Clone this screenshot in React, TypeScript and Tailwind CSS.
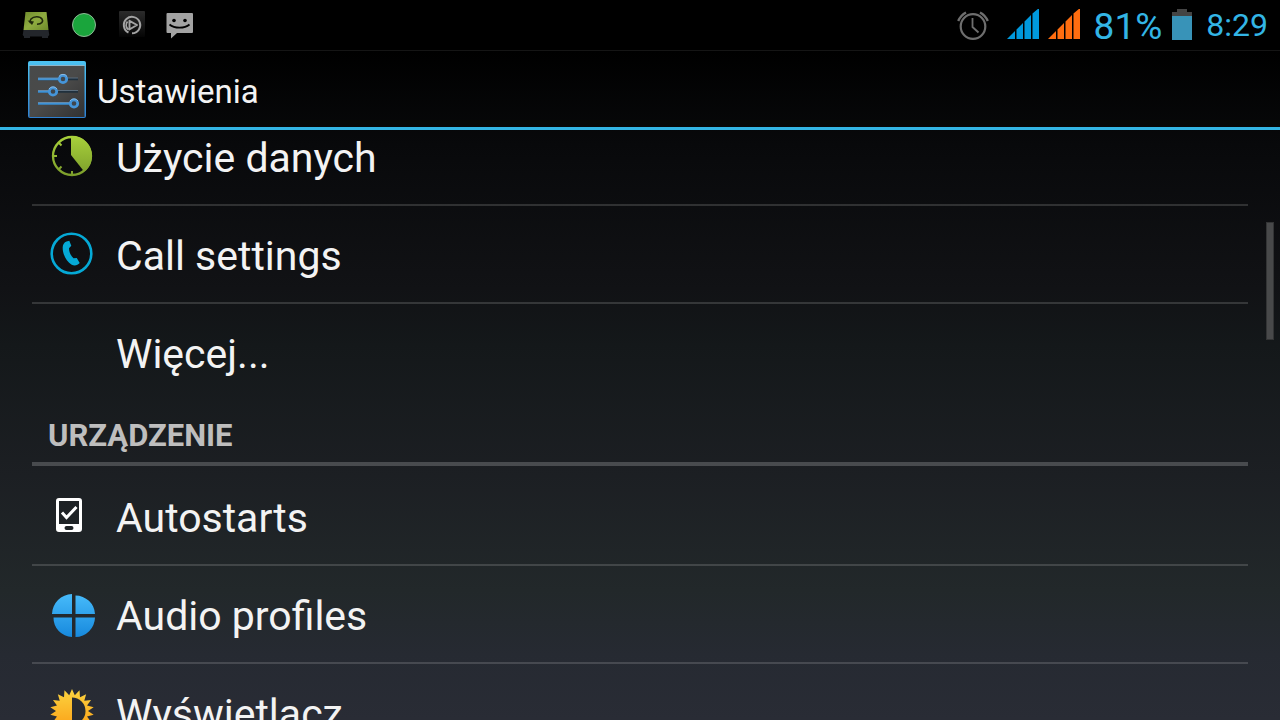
import React from 'react';

const DriveIcon = () => (
  <svg width="28" height="28" viewBox="0 0 28 28" aria-hidden="true">
    <defs>
      <linearGradient id="drive" x1="0" y1="0" x2="1" y2="1">
        <stop offset="0" stopColor="#6f8b2c" />
        <stop offset="0.5" stopColor="#8fac40" />
        <stop offset="1" stopColor="#6d8a2a" />
      </linearGradient>
    </defs>
    <path d="M3.500 1h21l2 18h-25z" fill="url(#drive)" />
    <path d="M1.500 19h25l.8 5-1.300 1.500V27h-6v-1.500H8V27H2v-1.500L.7 24z" fill="#23262b" />
    <path d="M15 13.300c5-.2 6.500-3 5-5.300-2-3-8.500-2.800-11 0-1 1.200-1.200 2.500-.5 4" fill="none" stroke="#20290c" strokeWidth="1.600" />
    <path d="M5.500 9.500l6.500 1-2 3.500z" fill="#20290c" />
  </svg>
);

const PlayerIcon = () => (
  <svg width="28" height="28" viewBox="0 0 28 28" aria-hidden="true">
    <defs>
      <linearGradient id="player" x1="0" y1="0" x2="0" y2="1">
        <stop offset="0" stopColor="#2b2b2b" />
        <stop offset="1" stopColor="#050505" />
      </linearGradient>
    </defs>
    <rect x="1" y="0" width="26" height="26" rx="1" fill="url(#player)" />
    <path d="M10.500 21.500A8.200 8.200 0 1 1 14 22.300" fill="none" stroke="#a3a3a3" strokeWidth="2" />
    <path d="M10 18.500A6 6 0 0 1 9.500 10.500M11.500 18.500V9.800l7.500 4.200-8.500 5" fill="none" stroke="#a3a3a3" strokeWidth="1.900" strokeLinejoin="round" />
  </svg>
);

const MessageIcon = () => (
  <svg width="28" height="28" viewBox="0 0 28 28" aria-hidden="true">
    <path d="M1.500 2h24.500a1 1 0 0 1 1 1v18a1 1 0 0 1-1 1H11l-6 5.500V22H1.500a1 1 0 0 1-1-1V3a1 1 0 0 1 1-1z" fill="#a3a3a3" />
    <circle cx="8" cy="9.500" r="1.800" fill="#000" />
    <circle cx="19" cy="9.500" r="1.800" fill="#000" />
    <path d="M3.500 13.500c5 4.200 15 4.200 20 0" fill="none" stroke="#000" strokeWidth="1.800" />
  </svg>
);

const AlarmIcon = () => (
  <svg width="32" height="32" viewBox="0 0 32 32" fill="none" stroke="#6e6e6e" aria-hidden="true">
    <circle cx="16" cy="17.500" r="12.300" strokeWidth="2.200" />
    <path d="M15.500 9v9l6 5.500" strokeWidth="1.800" />
    <path d="M1.200 12C2.800 8.500 5 5.500 9 3.500M30.800 12C29.200 8.500 27 5.500 23 3.500" strokeWidth="2.400" />
  </svg>
);

const SignalIcon = ({ color }: { color: string }) => (
  <svg width="32" height="32" viewBox="0 0 32 32" fill={color} aria-hidden="true">
    <path d="M0 30l8-8v8zM9.500 20.500L16 14v16H9.500zM17.500 12.500L24 6v24h-6.500zM25.500 4.500L32-1v31h-6.500z" />
  </svg>
);

const BatteryIcon = () => (
  <svg width="20" height="32" viewBox="0 0 20 32" aria-hidden="true">
    <path d="M5 0h10v3h5v5H0V3h5z" fill="#444" />
    <rect y="7" width="20" height="24" fill="#3893b8" />
  </svg>
);

const SettingsIcon = () => (
  <svg width="60" height="60" viewBox="0 0 60 60" aria-hidden="true">
    <defs>
      <linearGradient id="panel" x1="0" y1="0" x2="1" y2="1">
        <stop offset="0" stopColor="#484a4a" />
        <stop offset="0.5" stopColor="#4a4a49" />
        <stop offset="1" stopColor="#313132" />
      </linearGradient>
      <linearGradient id="frame" x1="0" y1="0" x2="0" y2="1">
        <stop offset="0" stopColor="#4cc3f2" />
        <stop offset="1" stopColor="#2e7fd0" />
      </linearGradient>
    </defs>
    <rect x="1" y="1" width="58" height="57" rx="2" fill="url(#frame)" />
    <rect x="2.500" y="6" width="55" height="51" fill="url(#panel)" />
    <path d="M2.500 5.500h55" stroke="#8eb5c8" strokeWidth="1" />
    {[
      [19, 36],
      [31.5, 26],
      [43.5, 47],
    ].map(([y, x]) => (
      <g key={y} fill="none">
        <path d={`M11 ${y}h40`} stroke="#20303d" strokeWidth="2.500" />
        <path d={`M11 ${y}h${x - 11}`} stroke="#3f93d6" strokeWidth="2.500" />
        <path d={`M11 ${y - 1}h40`} stroke="#8196a8" strokeWidth="0.600" />
        <circle cx={x} cy={y} r="3.700" fill="#3f464d" stroke="#4595d9" strokeWidth="2.800" />
        <path d={`M${x - 4} ${y - 2.5}a4.800 4.800 0 0 1 8 0`} stroke="#8abbe5" strokeWidth="1" />
      </g>
    ))}
  </svg>
);

const DataUsageIcon = () => (
  <svg width="48" height="48" viewBox="0 0 48 48" aria-hidden="true">
    <defs>
      <linearGradient id="usage" x1="0" y1="4" x2="0" y2="44" gradientUnits="userSpaceOnUse">
        <stop offset="0" stopColor="#a8d13b" />
        <stop offset="1" stopColor="#7c9e2b" />
      </linearGradient>
    </defs>
    <circle cx="24" cy="24" r="19" fill="none" stroke="url(#usage)" strokeWidth="2.300" />
    <path d="M23 4h1a20 20 0 0 1 12.500 35.500L34.500 37.500 23 23z" fill="url(#usage)" />
    <path d="M24 43v-4M5 24h4M10.500 10.500l3 3M10.500 37.500l3-3" stroke="url(#usage)" strokeWidth="2" />
  </svg>
);

const CallIcon = () => (
  <svg width="48" height="48" viewBox="0 0 48 48" aria-hidden="true">
    <circle cx="23.500" cy="23.500" r="19.800" fill="none" stroke="#05a9d6" strokeWidth="2.600" />
    <path d="M18.500 11.500l2.800-.8 2 5-2.300 2.500c0 3.500 1.500 7 4.500 10l3.300-.3 2.900 5c-2 2.500-5.200 3.200-8 1.800-5.500-3.200-9.300-11-9-17.500.1-2.500 1.500-5 3.800-5.700z" fill="#05a9d6" />
  </svg>
);

const AutostartIcon = () => (
  <svg width="48" height="48" viewBox="0 0 48 48" aria-hidden="true">
    <path
      fillRule="evenodd"
      d="M11 6h20a3 3 0 0 1 3 3v28a3 3 0 0 1-3 3H11a3 3 0 0 1-3-3V9a3 3 0 0 1 3-3zm0 3v23h20V9zm7.500 25a2 2 0 0 0 0 4h5a2 2 0 0 0 0-4z"
      fill="#fff"
    />
    <path d="M14 20.500l4.500 5L28.500 15" fill="none" stroke="#fff" strokeWidth="3" />
  </svg>
);

const AudioIcon = () => (
  <svg width="48" height="48" viewBox="0 0 48 48" aria-hidden="true">
    <defs>
      <linearGradient id="audio" x1="0" y1="3" x2="0" y2="47" gradientUnits="userSpaceOnUse">
        <stop offset="0" stopColor="#48bcfb" />
        <stop offset="1" stopColor="#1789dd" />
      </linearGradient>
    </defs>
    <path
      d="M24 4v20H4A20.500 20.500 0 0 1 24 4zM27.500 5.500A19.500 19.500 0 0 1 47 24H27.500zM5.500 27.500H24V47A19 19 0 0 1 5.500 27.500zM27.500 27.500H47A20 20 0 0 1 27.500 47z"
      fill="url(#audio)"
    />
  </svg>
);

// Spikes around the disc, starting at twelve o'clock
const spikes = Array.from({ length: 36 }, (_, i) => {
  const radius = i % 2 === 0 ? 22 : 16;
  const angle = (i * Math.PI) / 18;
  return `${24 + radius * Math.sin(angle)},${23 - radius * Math.cos(angle)}`;
}).join(' ');

const DisplayIcon = () => (
  <svg width="48" height="48" viewBox="0 0 48 48" aria-hidden="true">
    <defs>
      <linearGradient id="sun" x1="0" y1="0" x2="0" y2="1">
        <stop offset="0" stopColor="#fbd440" />
        <stop offset="1" stopColor="#fb9a12" />
      </linearGradient>
    </defs>
    <polygon points={spikes} fill="url(#sun)" />
    <path d="M24 9.500a13.500 13.500 0 0 1 0 27z" fill="#272b32" />
  </svg>
);

const wirelessItems = [
  { label: 'Użycie danych', icon: <DataUsageIcon /> },
  { label: 'Call settings', icon: <CallIcon /> },
  { label: 'Więcej...', icon: null },
];

const deviceItems = [
  { label: 'Autostarts', icon: <AutostartIcon /> },
  { label: 'Audio profiles', icon: <AudioIcon /> },
  { label: 'Wyświetlacz', icon: <DisplayIcon /> },
];

const SettingsList = ({ items }: { items: typeof wirelessItems }) => (
  <ul className="divide-y-2 divide-white/15">
    {items.map((item) => (
      <li key={item.label}>
        <a href="#" className="flex h-24 items-center gap-5 pl-4">
          <span className="h-12 w-12 shrink-0">{item.icon}</span>
          <span className="pt-1 text-[41px] leading-[48px]">{item.label}</span>
        </a>
      </li>
    ))}
  </ul>
);

const App = () => {
  return (
    <div className="flex h-screen flex-col overflow-hidden bg-[linear-gradient(to_bottom,#000_7%,#08090b_20%,#111215_40%,#14181a_48%,#1c1f23_66%,#22282a_82%,#262a32_91%,#292c35_100%)] font-['Roboto',sans-serif] text-[#f3f3f3]">
      <div className="flex h-[51px] shrink-0 items-center justify-between border-b border-[#151515] bg-black pr-3 pl-[22px]">
        <div className="flex items-center gap-5">
          <DriveIcon />
          <span className="mx-0.5 h-6 w-6 rounded-full border border-[#8fb896] bg-[#1aa53c]" />
          <PlayerIcon />
          <MessageIcon />
        </div>
        <div className="flex items-center text-[#33b5e5]">
          <AlarmIcon />
          <span className="ml-[18px] flex gap-[9px]">
            <SignalIcon color="#0099dd" />
            <SignalIcon color="#ff6d10" />
          </span>
          <span className="ml-3.5 pt-1 text-[37px] leading-10">81%</span>
          <span className="ml-2.5">
            <BatteryIcon />
          </span>
          <span className="ml-3.5 text-[32px] leading-10">8:29</span>
        </div>
      </div>

      <header className="flex h-[79px] shrink-0 items-center gap-2.5 border-b-3 border-[#33b5e5] pt-0.5 pl-[27px]">
        <SettingsIcon />
        <h1 className="pt-1 text-[33px] leading-10">Ustawienia</h1>
      </header>

      <main className="relative min-h-0 flex-1 overflow-hidden px-8">
        {/* The list is scrolled part of the way down */}
        <div className="-mt-[22px]">
          <SettingsList items={wirelessItems} />
          <h2 className="mb-0.5 h-[66px] border-b-4 border-white/20 pt-4 pl-4 text-[31px] leading-10 font-bold text-[#bebebe]">
            URZĄDZENIE
          </h2>
          <SettingsList items={deviceItems} />
        </div>
        <div className="absolute top-[92px] right-1.5 h-[118px] w-2 border border-[#333435] bg-[#48494a]" />
      </main>
    </div>
  );
};

export default App;
